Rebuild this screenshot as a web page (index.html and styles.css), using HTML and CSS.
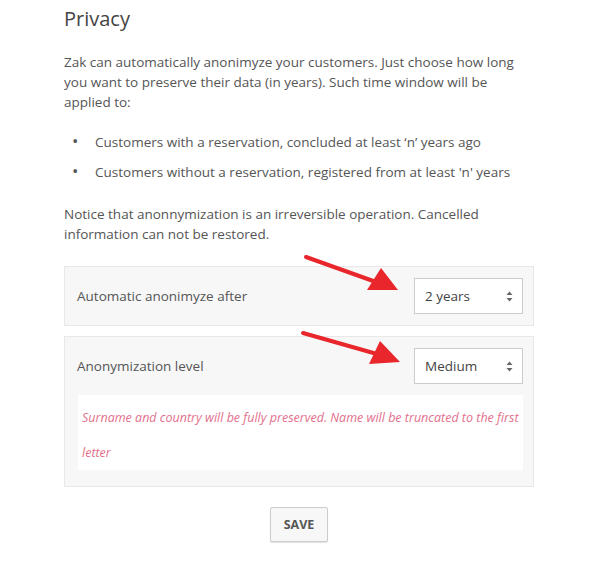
FILE: index.html
```html
<!DOCTYPE html>
<html lang="en">

<head>
    <meta charset="UTF-8">
    <meta name="viewport" content="width=device-width, initial-scale=1.0">
    <title>Privacy</title>

    <link rel="stylesheet" href="styles.css">
</head>

<body>

    <div class="privacy">
        <h2>Privacy</h2>

        <p class="intro">Zak can automatically anonimyze your customers. Just choose how long you want to preserve their data (in years). Such time window will be applied to:</p>

        <ul class="rules">
            <li>Customers with a reservation, concluded at least ‘n’ years ago</li>
            <li>Customers without a reservation, registered from at least 'n' years</li>
        </ul>

        <p class="notice">Notice that anonnymization is an irreversible operation. Cancelled information can not be restored.</p>

        <div class="setting">
            <div class="setting-row">
                <span class="setting-label">Automatic anonimyze after</span>
                <div class="select-box">
                    <span>2 years</span>
                    <svg width="7" height="11" viewBox="0 0 7 11"><path d="M3.5 0.5 L6.5 4 H0.5 Z M3.5 10.5 L6.5 7 H0.5 Z" fill="#666"/></svg>
                </div>
            </div>
        </div>

        <div class="setting">
            <div class="setting-row">
                <span class="setting-label">Anonymization level</span>
                <div class="select-box">
                    <span>Medium</span>
                    <svg width="7" height="11" viewBox="0 0 7 11"><path d="M3.5 0.5 L6.5 4 H0.5 Z M3.5 10.5 L6.5 7 H0.5 Z" fill="#666"/></svg>
                </div>
            </div>
            <div class="level-info">
                <p>Surname and country will be fully preserved. Name will be truncated to the first letter</p>
            </div>
        </div>

        <div class="actions">
            <button type="button">SAVE</button>
        </div>

        <!-- frecce rosse sopra i select -->
        <svg class="arrows" width="589" height="581" viewBox="0 0 589 581">
            <line x1="306" y1="257" x2="376" y2="282" stroke="#e8262b" stroke-width="4" stroke-linecap="round"/>
            <polygon points="398,290 367,290 381,268" fill="#e8262b"/>
            <line x1="303" y1="333" x2="377" y2="354" stroke="#e8262b" stroke-width="4" stroke-linecap="round"/>
            <polygon points="400,362 369,364 380,341" fill="#e8262b"/>
        </svg>
    </div>

</body>

</html>
```

FILE: styles.css
```css
body {
    font-family: "Open Sans", "Noto Sans", sans-serif;
    background-color: #fff;
    color: #555;
    margin: 0;
}

.privacy {
    position: relative;
    width: 470px;
    padding: 0 55px 20px 64px;
    height: 561px;
}

.privacy h2 {
    font-size: 20px;
    font-weight: 400;
    color: #444;
    margin: 0;
    padding-top: 5px;
    line-height: 28px;
}

.intro,
.notice {
    font-size: 13.5px;
    line-height: 20px;
    margin: 0;
}

.intro {
    margin-top: 19px;
}

.rules {
    list-style: none;
    margin: 20px 0 0;
    padding-left: 8px;
    font-size: 13.5px;
    line-height: 20px;
}

.rules li {
    margin-bottom: 10px;
}

.rules li::before {
    content: "\2022";
    display: inline-block;
    width: 23px;
    font-size: 17px;
    line-height: 10px;
    color: #555;
}

.notice {
    margin-top: 22px;
}

.setting {
    background-color: #f7f7f7;
    border: 1px solid #e8e8e8;
    margin-top: 22px;
}

.setting + .setting {
    margin-top: 10px;
}

.setting-row {
    display: flex;
    justify-content: space-between;
    align-items: center;
    padding: 11px 10px 11px 12px;
}

.setting-label {
    font-size: 13.5px;
}

.select-box {
    display: flex;
    justify-content: space-between;
    align-items: center;
    padding: 0 9px 0 10px;
    box-sizing: border-box;
    background-color: #fff;
    border: 1px solid #ccc;
    width: 109px;
    height: 36px;
    font-size: 13.5px;
    color: #444;
}

.level-info {
    background-color: #fff;
    margin: 0 10px 16px 13px;
    padding: 5px 4px 0 4px;
}

.level-info p {
    margin: 0;
    color: #e26f8d;
    font-style: italic;
    font-size: 12.5px;
    line-height: 35px;
}

.actions {
    display: flex;
    justify-content: center;
    margin-top: 20px;
}

button {
    font-family: "Open Sans", sans-serif;
    background-color: #f7f7f7;
    color: #555;
    font-weight: 700;
    font-size: 12.5px;
    width: 58px;
    height: 35px;
    border: 1px solid #ccc;
    border-radius: 2px;
    box-shadow: 0 1px 1px rgba(0, 0, 0, 0.12);
    cursor: pointer;
}

.arrows {
    position: absolute;
    top: 0;
    left: 0;
}
```
